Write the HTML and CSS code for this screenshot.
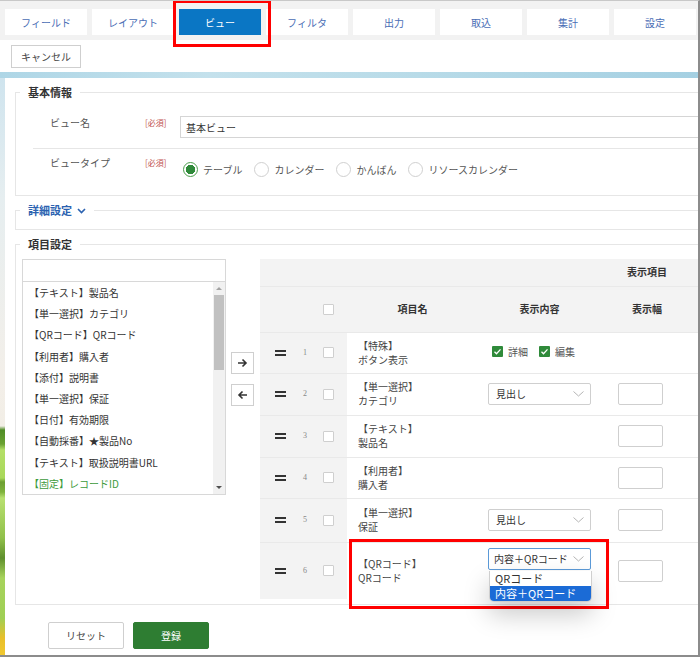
FILE: index.html
```html
<!DOCTYPE html>
<html lang="ja">
<head>
  <meta charset="UTF-8">
  <title>ビュー設定</title>
  <link rel="stylesheet" href="styles.css">
</head>
<body>
<div class="frame">
  <nav class="tabs">
    <a class="tab">フィールド</a>
    <a class="tab">レイアウト</a>
    <a class="tab active">ビュー</a>
    <a class="tab">フィルタ</a>
    <a class="tab">出力</a>
    <a class="tab">取込</a>
    <a class="tab">集計</a>
    <a class="tab">設定</a>
  </nav>
  <div class="toolbar"><button class="btn">キャンセル</button></div>
  <div class="band"></div>

  <div class="main">
    <div class="strip"></div>
    <div class="panel">

      <fieldset class="group basic">
        <legend>基本情報</legend>
        <div class="form-row name-row">
          <span class="label">ビュー名</span>
          <span class="req">[必須]</span>
          <input class="text" value="基本ビュー">
        </div>
        <div class="form-row type-row">
          <span class="label">ビュータイプ</span>
          <span class="req">[必須]</span>
          <div class="radios">
            <label class="radio"><span class="dot checked"></span>テーブル</label>
            <label class="radio"><span class="dot"></span>カレンダー</label>
            <label class="radio"><span class="dot"></span>かんばん</label>
            <label class="radio"><span class="dot"></span>リソースカレンダー</label>
          </div>
        </div>
      </fieldset>

      <fieldset class="group detail">
        <legend class="link">詳細設定 <svg width="9" height="6" viewBox="0 0 9 6"><polyline points="1,1 4.5,4.5 8,1" fill="none" stroke="#2b62b0" stroke-width="1.6"/></svg></legend>
        <div class="detail-body"></div>
      </fieldset>

      <fieldset class="group items">
        <legend>項目設定</legend>
        <div class="items-body">
          <div class="picker">
            <input class="search">
            <div class="list">
              <ul>
                <li>【テキスト】製品名</li>
                <li>【単一選択】カテゴリ</li>
                <li>【QRコード】QRコード</li>
                <li>【利用者】購入者</li>
                <li>【添付】説明書</li>
                <li>【単一選択】保証</li>
                <li>【日付】有効期限</li>
                <li>【自動採番】★製品No</li>
                <li>【テキスト】取扱説明書URL</li>
                <li class="fixed">【固定】レコードID</li>
              </ul>
              <div class="scrollbar">
                <span class="arrow up"></span>
                <span class="thumb"></span>
                <span class="arrow down"></span>
              </div>
            </div>
          </div>

          <div class="movers">
            <button class="move"><svg width="11" height="10" viewBox="0 0 11 10"><path d="M1 5h8M5.5 1.5L9 5 5.5 8.5" fill="none" stroke="#333" stroke-width="1.6"/></svg></button>
            <button class="move"><svg width="11" height="10" viewBox="0 0 11 10"><path d="M10 5H2M5.5 1.5L2 5l3.5 3.5" fill="none" stroke="#333" stroke-width="1.6"/></svg></button>
          </div>

          <table class="grid">
            <colgroup>
              <col style="width:36px"><col style="width:18px"><col style="width:33px">
              <col style="width:131px"><col style="width:123px"><col style="width:92px"><col style="width:87px">
            </colgroup>
            <thead>
              <tr class="head-top">
                <th></th><th></th><th></th><th></th><th></th><th>表示項目</th><th></th>
              </tr>
              <tr class="head-cols">
                <th></th><th></th><th class="chk-cell"><span class="box"></span></th>
                <th>項目名</th><th>表示内容</th><th>表示幅</th><th></th>
              </tr>
            </thead>
            <tbody>
              <tr class="r1">
                <td class="side drag"><span class="handle"></span></td>
                <td class="side num">1</td>
                <td class="side chk-cell"><span class="box"></span></td>
                <td class="name">【特殊】<br>ボタン表示</td>
                <td class="content"><span class="flag"><span class="gbox"></span>詳細</span><span class="flag"><span class="gbox"></span>編集</span></td>
                <td></td><td></td>
              </tr>
              <tr class="r2">
                <td class="side drag"><span class="handle"></span></td>
                <td class="side num">2</td>
                <td class="side chk-cell"><span class="box"></span></td>
                <td class="name">【単一選択】<br>カテゴリ</td>
                <td class="content"><div class="select">見出し<svg width="11" height="6" viewBox="0 0 11 6"><polyline points="0.5,0.5 5.5,5 10.5,0.5" fill="none" stroke="#b5b5b5" stroke-width="1"/></svg></div></td>
                <td class="width"><span class="num-input"></span></td><td></td>
              </tr>
              <tr class="r3">
                <td class="side drag"><span class="handle"></span></td>
                <td class="side num">3</td>
                <td class="side chk-cell"><span class="box"></span></td>
                <td class="name">【テキスト】<br>製品名</td>
                <td class="content"></td>
                <td class="width"><span class="num-input"></span></td><td></td>
              </tr>
              <tr class="r4">
                <td class="side drag"><span class="handle"></span></td>
                <td class="side num">4</td>
                <td class="side chk-cell"><span class="box"></span></td>
                <td class="name">【利用者】<br>購入者</td>
                <td class="content"></td>
                <td class="width"><span class="num-input"></span></td><td></td>
              </tr>
              <tr class="r5">
                <td class="side drag"><span class="handle"></span></td>
                <td class="side num">5</td>
                <td class="side chk-cell"><span class="box"></span></td>
                <td class="name">【単一選択】<br>保証</td>
                <td class="content"><div class="select">見出し<svg width="11" height="6" viewBox="0 0 11 6"><polyline points="0.5,0.5 5.5,5 10.5,0.5" fill="none" stroke="#b5b5b5" stroke-width="1"/></svg></div></td>
                <td class="width"><span class="num-input"></span></td><td></td>
              </tr>
              <tr class="r6">
                <td class="side drag"><span class="handle"></span></td>
                <td class="side num">6</td>
                <td class="side chk-cell"><span class="box"></span></td>
                <td class="name">【QRコード】<br>QRコード</td>
                <td class="content top">
                  <div class="select open">内容＋QRコード<svg width="11" height="6" viewBox="0 0 11 6"><polyline points="0.5,0.5 5.5,5 10.5,0.5" fill="none" stroke="#b5b5b5" stroke-width="1"/></svg>
                    <ul class="dropdown">
                      <li>QRコード</li>
                      <li class="current">内容＋QRコード</li>
                    </ul>
                  </div>
                </td>
                <td class="width"><span class="num-input"></span></td><td></td>
              </tr>
            </tbody>
          </table>
        </div>
      </fieldset>

      <div class="actions">
        <button class="btn wide">リセット</button>
        <button class="btn wide primary">登録</button>
      </div>
    </div>
  </div>

  <div class="mark mark-tab"></div>
  <div class="mark mark-row"></div>
</div>
</body>
</html>
```

FILE: styles.css
```css
body {
  margin: 0;
  font-family: "Noto Sans CJK JP", "Noto Sans", sans-serif;
  font-size: 10px;
  color: #444;
}
.frame {
  position: relative;
  width: 700px;
  height: 657px;
  box-sizing: border-box;
  border-top: 1px solid #c8c8c8;
  border-right: 2px solid #8c8c8c;
  border-bottom: 2px solid #8c8c8c;
  overflow: hidden;
  background: #fff;
}

/* tabs */
.tabs {
  display: flex;
  gap: 5px;
  padding: 8px 0 5px 5px;
  background: #f2f2f2;
}
.tab {
  flex: 0 0 82px;
  height: 26px;
  display: flex;
  align-items: center;
  justify-content: center;
  background: #fff;
  color: #4a6db5;
}
.tab.active {
  background: #0a76c4;
  color: #fff;
}
.toolbar {
  height: 32px;
  box-sizing: border-box;
  padding: 5px 0 0 11px;
}
.btn {
  font: inherit;
  height: 23px;
  padding: 0 9px;
  background: #fff;
  border: 1px solid #cfcfcf;
  color: #444;
}
.band {
  height: 6px;
  background: linear-gradient(90deg, #aed6e6 0, #c4e1ec 30%, #b8dbe8 60%, #a5d0e2 100%);
}

.main {
  display: flex;
  height: 577px;
}
.strip {
  flex: 0 0 5px;
  background: linear-gradient(180deg, #cfe4ee 0, #e6eef0 120px, #f3efe9 300px, #f2eee6 348px, #4f8c25 352px, #6aa232 366px, #b4df68 372px, #a9d85a 400px, #6d9f32 404px, #7fb33c 414px, #b8e070 420px, #90c04a 460px, #5f8f2d 480px, #a7d35c 500px, #9fcf55 540px, #e8bf2a 560px, #f0c830 577px);
}
.panel {
  flex: 1;
  min-width: 0;
  overflow: hidden;
  padding: 7px 0 0 10px;
}

/* fieldsets */
.group {
  margin: 0;
  padding: 0;
  width: 760px;
  box-sizing: border-box;
  border: 1px solid #e6e6e6;
}
.group legend {
  margin-left: 4px;
  padding: 0 8px;
  font-size: 11px;
  line-height: 14px;
  font-weight: bold;
  color: #333;
}
.group legend.link {
  color: #2b62b0;
}
.group legend svg {
  margin-left: 2px;
  vertical-align: 1px;
}
.detail, .items {
  margin-top: 7px;
}
.detail-body {
  height: 12px;
}

.form-row {
  display: flex;
  align-items: flex-start;
  margin-left: 17px;
  padding-left: 17px;
  line-height: 14px;
}
.name-row {
  padding-top: 17px;
  padding-bottom: 10px;
  border-bottom: 1px solid #e6e6e6;
}
.type-row {
  height: 46px;
  box-sizing: border-box;
  padding-top: 7px;
}
.label {
  width: 95px;
  color: #555;
}
.req {
  width: 35px;
  font-size: 8px;
  color: #c0504d;
}
.text {
  width: 560px;
  height: 22px;
  box-sizing: border-box;
  border: 1px solid #d5d5d5;
  padding: 0 5px;
  font: inherit;
  color: #333;
}
.radios {
  display: flex;
  gap: 12px;
  margin-top: 6px;
  margin-left: 3px;
}
.radio {
  display: flex;
  align-items: center;
  gap: 5px;
  color: #555;
}
.dot {
  width: 15px;
  height: 15px;
  box-sizing: border-box;
  border: 1px solid #d0d0d0;
  border-radius: 50%;
  background: #fff;
}
.dot.checked {
  border-color: #4d9f4d;
  background: radial-gradient(circle, #2f8a3a 0 4.5px, #fff 5px);
}

/* field picker */
.items-body {
  display: flex;
  align-items: flex-start;
  padding: 8px 0 5px 6px;
}
.picker {
  flex: 0 0 204px;
}
.search {
  display: block;
  width: 204px;
  height: 23px;
  box-sizing: border-box;
  border: 1px solid #d8d8d8;
  font: inherit;
}
.list {
  display: flex;
  height: 213px;
  box-sizing: border-box;
  border: 1px solid #d8d8d8;
  border-top: none;
  overflow: hidden;
}
.list ul {
  flex: 1;
  margin: 0;
  padding: 0 0 0 6px;
  list-style: none;
  color: #333;
}
.list li {
  height: 21.2px;
  line-height: 21.2px;
  white-space: nowrap;
}
.list li.fixed {
  color: #3c9a3c;
}
.scrollbar {
  flex: 0 0 12px;
  display: flex;
  flex-direction: column;
  align-items: center;
  background: #f1f1f1;
}
.arrow {
  width: 0;
  height: 0;
  border-left: 3px solid transparent;
  border-right: 3px solid transparent;
}
.arrow.up {
  margin-top: 5px;
  border-bottom: 3px solid #a3a3a3;
}
.arrow.down {
  margin-top: auto;
  margin-bottom: 5px;
  border-top: 3px solid #505050;
}
.thumb {
  width: 10px;
  height: 75px;
  margin-top: 5px;
  background: #c1c1c1;
}

.movers {
  flex: 0 0 23px;
  display: flex;
  flex-direction: column;
  gap: 10px;
  margin: 93px 0 0 5px;
}
.move {
  width: 23px;
  height: 22px;
  padding: 0;
  display: flex;
  align-items: center;
  justify-content: center;
  background: #fff;
  border: 1px solid #cfcfcf;
}

/* item table */
.grid {
  flex: 0 0 520px;
  width: 520px;
  margin-left: 6px;
  table-layout: fixed;
  border-collapse: collapse;
  line-height: 14px;
  color: #444;
}
.grid th {
  background: #f3f3f3;
  font-weight: bold;
  color: #333;
  text-align: center;
  padding: 0;
}
.head-top {
  height: 27px;
  border-bottom: 1px solid #e9e9e9;
}
.head-cols {
  height: 46px;
}
.grid tbody tr {
  border-top: 1px solid #e9e9e9;
}
.grid td {
  padding: 0;
  vertical-align: middle;
}
.r1 { height: 41px; }
.r2, .r3 { height: 42px; }
.r4 { height: 41px; }
.r5 { height: 44px; }
.r6 { height: 57px; }
.grid td.side {
  background: #f3f3f3;
}
.drag {
  padding-left: 15px !important;
}
.handle {
  display: block;
  width: 11px;
  height: 6px;
  box-sizing: border-box;
  border-top: 2px solid #333;
  border-bottom: 2px solid #333;
}
.num {
  text-align: center;
  font-family: "Liberation Serif", serif;
  font-size: 8px;
  color: #888;
}
.chk-cell {
  text-align: left !important;
  padding-left: 9px !important;
}
.box {
  display: block;
  width: 11px;
  height: 11px;
  box-sizing: border-box;
  border: 1px solid #cfcfcf;
  border-radius: 1px;
  background: #fff;
}
.name {
  padding-left: 11px !important;
  white-space: nowrap;
}
.content {
  padding-left: 10px !important;
}
.content.top {
  vertical-align: top !important;
  padding-top: 5px !important;
}
.flag {
  display: inline-flex;
  align-items: center;
  gap: 5px;
  margin-right: 11px;
  color: #555;
}
.flag:first-child {
  margin-left: 4px;
}
.gbox {
  width: 11px;
  height: 11px;
  border-radius: 1px;
  background: #2f8a3a url("data:image/svg+xml,%3Csvg xmlns='http://www.w3.org/2000/svg' viewBox='0 0 11 11'%3E%3Cpath d='M2.5 5.7l2 2 4-4.3' fill='none' stroke='%23fff' stroke-width='1.3'/%3E%3C/svg%3E") center / 11px 11px no-repeat;
}
.select {
  position: relative;
  width: 103px;
  height: 22px;
  box-sizing: border-box;
  display: flex;
  align-items: center;
  padding: 0 6px 0 7px;
  border: 1px solid #cfcfcf;
  border-radius: 2px;
  background: #fff;
  color: #333;
}
.select svg {
  margin-left: auto;
}
.select.open {
  border-color: #5b9ad8;
  padding-left: 5px;
}
.dropdown {
  position: absolute;
  top: 22px;
  left: 0;
  width: 101px;
  margin: 0;
  padding: 0;
  list-style: none;
  background: #fff;
  border: 1px solid #cfcfcf;
  border-top: none;
  border-radius: 0 0 5px 5px;
  box-shadow: 0 12px 26px rgba(0, 0, 0, 0.22);
  font-size: 11px;
  color: #333;
  z-index: 2;
}
.dropdown li {
  height: 15px;
  line-height: 15px;
  padding-left: 5px;
}
.dropdown li.current {
  background: #1b6bd6;
  color: #fff;
  border-radius: 0 0 4px 4px;
}
.width {
  padding-left: 17px !important;
}
.num-input {
  display: block;
  width: 45px;
  height: 22px;
  box-sizing: border-box;
  border: 1px solid #cfcfcf;
  border-radius: 2px;
  background: #fff;
}

/* bottom buttons */
.actions {
  display: flex;
  gap: 9px;
  margin-top: 17px;
  padding-left: 33px;
}
.btn.wide {
  width: 76px;
  height: 27px;
  border-radius: 2px;
}
.btn.primary {
  background: #2e7d32;
  border-color: #2e7d32;
  color: #fff;
}

/* red highlight boxes */
.mark {
  position: absolute;
  box-sizing: border-box;
  border: 3px solid #f00;
}
.mark-tab {
  left: 173px;
  top: -1px;
  width: 98px;
  height: 47px;
}
.mark-row {
  left: 349px;
  top: 538px;
  width: 260px;
  height: 70px;
}
```
